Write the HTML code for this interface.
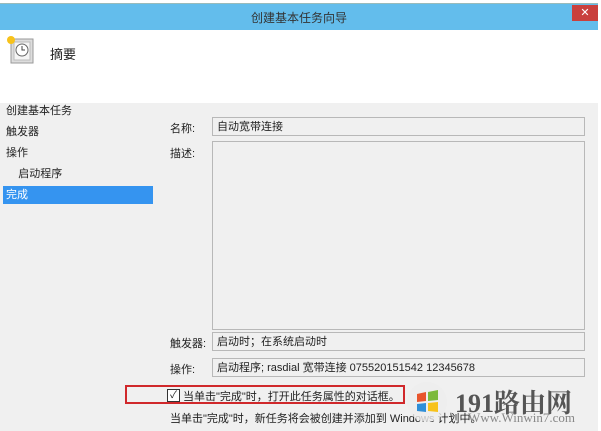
<!DOCTYPE html><html><head><meta charset="utf-8"><style>
body{margin:0;width:601px;height:431px;overflow:hidden;background:#fff;font-family:"Liberation Sans","Noto Sans CJK SC",sans-serif;font-size:11px;color:#222;position:relative}
div{position:absolute}
.f{background:#f0f0f0;border:1px solid #b8b8b8;box-sizing:border-box;padding:3px 4px;line-height:12px}
</style></head><body>
<div style="left:0;top:3px;width:598px;height:27px;background:#63bdec;border-top:1px solid #9bb"></div>
<div style="left:0;top:9px;width:598px;text-align:center;font-size:12px;color:#333">创建基本任务向导</div>
<div style="left:572px;top:5px;width:26px;height:16px;background:#c9403d;color:#fff;text-align:center;line-height:16px;font-size:11px">✕</div>
<div style="left:0;top:30px;width:598px;height:73px;background:#fff"></div>
<svg style="position:absolute;left:4px;top:34px" width="30" height="30"><rect x="7" y="5" width="22" height="24" fill="#ddd" stroke="#999"/><rect x="10" y="8" width="16" height="18" fill="#f5f5f5" stroke="#bbb"/><circle cx="18" cy="16" r="6" fill="#fff" stroke="#666"/><path d="M18 12v4h3" stroke="#444" fill="none"/><circle cx="7" cy="6" r="4" fill="#f7c21b"/></svg>
<div style="left:50px;top:44px;font-size:13px">摘要</div>
<div style="left:0;top:103px;width:598px;height:328px;background:#f0f0f0"></div>
<div style="left:3px;top:186px;width:150px;height:18px;background:#3594f0"></div>
<div style="left:6px;top:101px;line-height:21px">创建基本任务<br>触发器<br>操作<br>&nbsp;&nbsp;&nbsp;&nbsp;启动程序<br><span style="color:#fff">完成</span></div>
<div style="left:170px;top:120px">名称:</div>
<div class="f" style="left:212px;top:117px;width:373px;height:19px">自动宽带连接</div>
<div style="left:170px;top:145px">描述:</div>
<div class="f" style="left:212px;top:141px;width:373px;height:189px"></div>
<div style="left:170px;top:335px">触发器:</div>
<div class="f" style="left:212px;top:332px;width:373px;height:19px">启动时；在系统启动时</div>
<div style="left:170px;top:361px">操作:</div>
<div class="f" style="left:212px;top:358px;width:373px;height:19px">启动程序; rasdial 宽带连接 075520151542 12345678</div>
<div style="left:125px;top:385px;width:280px;height:19px;border:2px solid #d0282b;box-sizing:border-box"></div>
<div style="left:167px;top:389px;width:11px;height:11px;border:1px solid #333;background:#fff;font-size:10px;line-height:11px;text-align:center">✓</div>
<div style="left:183px;top:388px">当单击"完成"时，打开此任务属性的对话框。</div>
<div style="left:170px;top:410px">当单击"完成"时，新任务将会被创建并添加到 Windows 计划中。</div>
<svg style="position:absolute;left:405px;top:380px" width="45" height="45"><circle cx="22" cy="22" r="20" fill="#eee" opacity=".8"/><path d="M12 14l9-2v9l-9 1z" fill="#e8552c"/><path d="M23 12l10-2v10l-10 1z" fill="#7cba3c"/><path d="M12 24l9-1v9l-9-1z" fill="#2f8fd8"/><path d="M23 23l10-1v10l-10-1z" fill="#f7c21b"/></svg>
<div style="left:455px;top:383px;font-size:26px;font-weight:bold;color:#555;font-family:'Liberation Serif','Noto Serif CJK SC',serif">191路由网</div>
<div style="left:468px;top:410px;font-size:13px;color:#888;font-family:'Liberation Serif',serif">Www.Winwin7.com</div>
</body></html>
